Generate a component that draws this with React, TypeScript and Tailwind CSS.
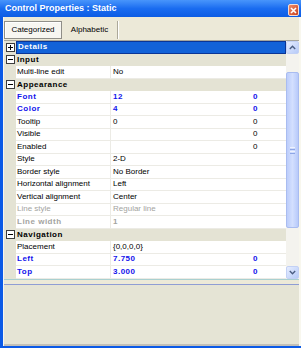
import React from "react";

type Row =
  | { kind: "cat"; label: string; open: boolean; selected?: boolean }
  | {
      kind: "prop";
      label: string;
      value?: string;
      extra?: string;
      tone?: "blue" | "gray" | "graybold";
    };

const rows: Row[] = [
  { kind: "cat", label: "Details", open: false, selected: true },
  { kind: "cat", label: "Input", open: true },
  { kind: "prop", label: "Multi-line edit", value: "No" },
  { kind: "cat", label: "Appearance", open: true },
  { kind: "prop", label: "Font", value: "12", extra: "0", tone: "blue" },
  { kind: "prop", label: "Color", value: "4", extra: "0", tone: "blue" },
  { kind: "prop", label: "Tooltip", value: "0", extra: "0" },
  { kind: "prop", label: "Visible", value: "", extra: "0" },
  { kind: "prop", label: "Enabled", value: "", extra: "0" },
  { kind: "prop", label: "Style", value: "2-D" },
  { kind: "prop", label: "Border style", value: "No Border" },
  { kind: "prop", label: "Horizontal alignment", value: "Left" },
  { kind: "prop", label: "Vertical alignment", value: "Center" },
  { kind: "prop", label: "Line style", value: "Regular line", tone: "gray" },
  { kind: "prop", label: "Line width", value: "1", tone: "graybold" },
  { kind: "cat", label: "Navigation", open: true },
  { kind: "prop", label: "Placement", value: "{0,0,0,0}" },
  { kind: "prop", label: "Left", value: "7.750", extra: "0", tone: "blue" },
  { kind: "prop", label: "Top", value: "3.000", extra: "0", tone: "blue" },
];

function ExpandBox({ open }: { open: boolean }) {
  return (
    <svg width="9" height="9" viewBox="0 0 9 9" className="block">
      <rect x="0.5" y="0.5" width="8" height="8" fill="#fff" stroke="#3c3c3c" />
      <line x1="2" y1="4.5" x2="7" y2="4.5" stroke="#000" />
      {!open && <line x1="4.5" y1="2" x2="4.5" y2="7" stroke="#000" />}
    </svg>
  );
}

function ScrollButton({ up }: { up: boolean }) {
  return (
    <div className="flex h-[12.5px] items-center justify-center rounded-[2px] border border-[#c3d1f5] bg-gradient-to-br from-[#e6edff] to-[#b7cbf8]">
      <svg width="7" height="5" viewBox="0 0 7 5">
        <path
          d={up ? "M0.8 4 L3.5 1.3 L6.2 4" : "M0.8 1 L3.5 3.7 L6.2 1"}
          fill="none"
          stroke="#4a5d82"
          strokeWidth="1.4"
        />
      </svg>
    </div>
  );
}

function GridRow({ row }: { row: Row }) {
  if (row.kind === "cat") {
    return (
      <div className="flex h-[12.5px] bg-[#e4e3d4]">
        <div className="flex w-[12px] shrink-0 items-center pl-[2px]">
          <ExpandBox open={row.open} />
        </div>
        <div
          className={
            row.selected
              ? "flex flex-1 items-center border border-[#0a3596] bg-[#1262d8] pl-[1px] font-bold tracking-[0.5px] text-white"
              : "flex flex-1 items-center pl-[1px] font-bold tracking-[0.5px]"
          }
        >
          {row.label}
        </div>
      </div>
    );
  }

  const tone =
    row.tone === "blue"
      ? "font-bold tracking-[0.5px] text-[#1212ec]"
      : row.tone === "gray"
        ? "text-[#a3a3a0]"
        : row.tone === "graybold"
          ? "font-bold tracking-[0.5px] text-[#a3a3a0]"
          : "text-black";

  return (
    <div className="flex h-[12.5px]">
      <div className="w-[12px] shrink-0 bg-[#e4e3d4]" />
      <div className="flex flex-1 border-b border-[#ecebe5] bg-white">
        <div className={`flex w-[95px] shrink-0 items-center overflow-hidden whitespace-nowrap border-r border-[#ecebe5] pl-[1px] ${tone}`}>
          {row.label}
        </div>
        <div className={`flex w-[142px] shrink-0 items-center overflow-hidden whitespace-nowrap pl-[2px] ${tone}`}>
          {row.value}
        </div>
        <div className={`flex items-center ${tone}`}>{row.extra}</div>
      </div>
    </div>
  );
}

export default function App() {
  return (
    <div className="flex h-[348px] w-[301px] flex-col overflow-hidden bg-[#ece9d8] font-['Liberation_Sans',Arial,sans-serif] text-[8px] leading-none text-black">
      {/* title bar */}
      <div className="flex h-[17px] shrink-0 items-center bg-gradient-to-b from-[#4895fb] via-[#1a6cf0] to-[#0c5ce4] pl-[5px]">
        <span className="text-[9px] font-bold text-white">Control Properties : Static</span>
        <div className="ml-auto mr-[2px] mt-[3px] flex h-[12px] w-[11px] items-center justify-center rounded-[2px] border border-[#f4ddd4] bg-gradient-to-br from-[#ef8a66] to-[#c9411c]">
          <svg width="7" height="7" viewBox="0 0 7 7">
            <path d="M1 1 L6 6 M6 1 L1 6" stroke="#fff" strokeWidth="1.6" />
          </svg>
        </div>
      </div>

      <div className="flex min-h-0 flex-1">
        <div className="w-[3px] shrink-0 bg-[#0b5ae6]" />
        <div className="w-px shrink-0 bg-[#f6f5ef]" />

        <div className="flex min-w-0 flex-1 flex-col">
          {/* toolbar */}
          <div className="flex h-[23px] shrink-0 items-start pt-[4px]">
            <div className="flex h-[18px] w-[58px] items-center justify-center border border-[#8f8e88] bg-[#f7f6f1] shadow-[inset_1px_1px_0_#fff]">
              Categorized
            </div>
            <div className="flex h-[18px] w-[55px] items-center justify-center">Alphabetic</div>
            <div className="h-[18px] w-px bg-[#aca899]" />
            <div className="h-[18px] w-px bg-white" />
          </div>

          {/* grid */}
          <div className="flex shrink-0 border-t border-[#a6a59c]">
            <div className="flex flex-1 flex-col">
              {rows.map((r, i) => (
                <GridRow key={i} row={r} />
              ))}
            </div>
            <div className="flex w-[13px] shrink-0 flex-col bg-[#f4f3ee]">
              <ScrollButton up />
              <div className="h-[18.5px]" />
              <div className="flex h-[156px] items-center justify-center rounded-[2px] border border-[#a9bcf0] bg-gradient-to-r from-[#bccdfb] via-[#d3dffe] to-[#b8cafa]">
                <div className="flex flex-col gap-[1px]">
                  <div className="h-px w-[5px] bg-[#eef2fe]" />
                  <div className="h-px w-[5px] bg-[#8ea6e6]" />
                  <div className="h-px w-[5px] bg-[#eef2fe]" />
                  <div className="h-px w-[5px] bg-[#8ea6e6]" />
                </div>
              </div>
              <div className="flex-1" />
              <ScrollButton up={false} />
            </div>
          </div>

          {/* splitter */}
          <div className="h-px shrink-0 bg-[#a9d0d0]" />
          <div className="h-[4px] shrink-0 bg-[#ece9d8]" />
          <div className="h-px shrink-0 bg-[#8f9dd4]" />

          {/* description */}
          <div className="flex-1 bg-[#e5e4d5]" />
          <div className="h-[2px] shrink-0 bg-[#c2c0b8]" />
        </div>

        <div className="w-[2px] shrink-0 bg-[#f8f7ee]" />
      </div>
      <div className="h-[2px] shrink-0 bg-[#0b5ae6]" />
    </div>
  );
}
